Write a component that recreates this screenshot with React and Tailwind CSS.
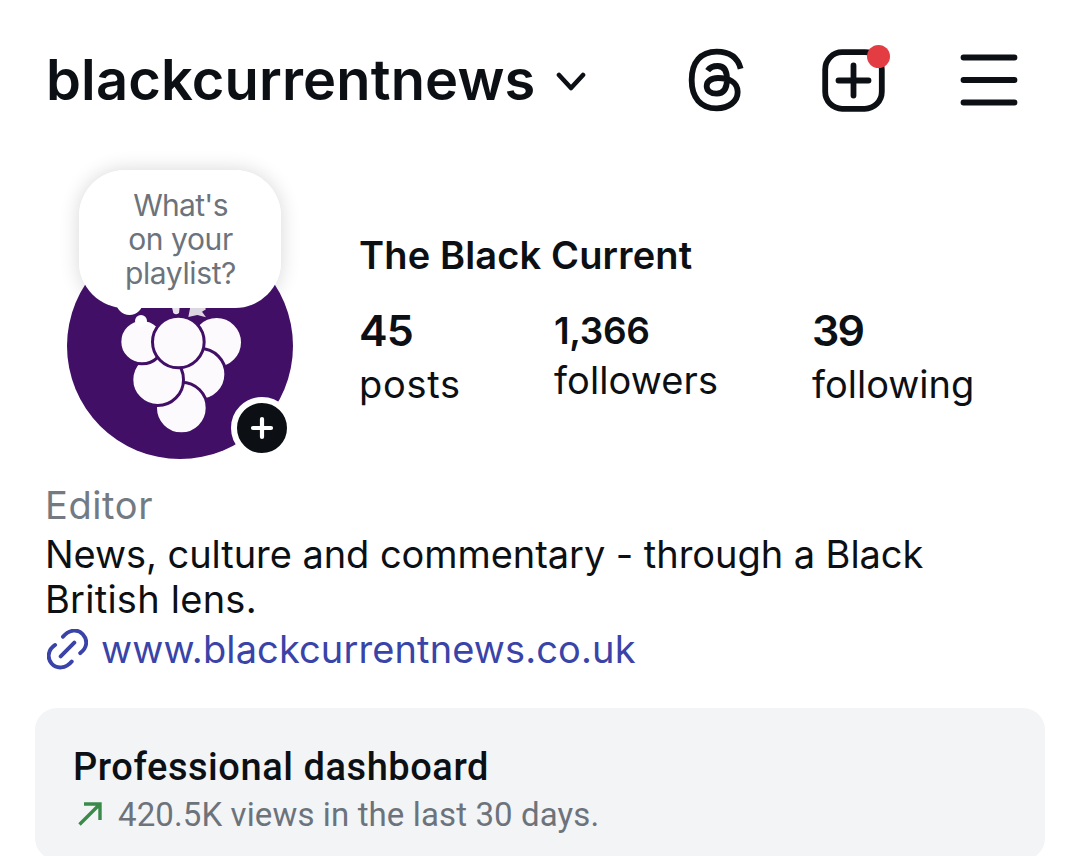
const STATS = [
  {
    value: '45',
    label: 'posts',
    column: 'w-[195px]',
    valueStyle: 'text-[43px] leading-[52px] tracking-[-0.9px]',
    labelStyle: 'mt-[3px] text-[38px] leading-[50px] tracking-[0.7px]',
  },
  {
    value: '1,366',
    label: 'followers',
    column: 'w-[258px]',
    valueStyle: 'text-[37px] leading-[54px] tracking-[-0.4px]',
    labelStyle: 'mt-[-3px] text-[38px] leading-[50px] tracking-[0.1px]',
  },
  {
    value: '39',
    label: 'following',
    column: 'w-[180px]',
    valueStyle: 'text-[43px] leading-[52px] tracking-[-1.8px]',
    labelStyle: 'mt-[3px] text-[38px] leading-[50px] tracking-[0px]',
  },
];

// back to front, each grape is outlined in the background purple
const GRAPES = [
  [500, 562, 73],
  [450, 658, 73],
  [394, 759, 73],
  [323, 674, 73],
  [276, 560, 62],
  [385, 561, 73],
];

function ThreadsIcon() {
  return (
    <svg className="h-16 w-14" viewBox="57 54 168 192" fill="none" stroke="currentColor" strokeWidth="17.5">
      <path d="M215 116C206 82 180 65 143 65C95 65 68 97 68 150C68 203 95 235 143 235C180 235 206 214 206 186C206 155 178 144 147 144C127 144 113 154 113 168C113 183 126 191 143 191C165 191 174 175 174 148C174 120 163 108 146 108C131 108 122 113 116 122" />
    </svg>
  );
}

function Header() {
  return (
    <header className="flex h-40 items-center pl-[46px] pr-[62px]">
      <button className="flex items-center">
        <span className="w-[490px] whitespace-nowrap text-left text-[56px] font-semibold leading-[64px] tracking-[0.15px]">
          blackcurrentnews
        </span>
        <svg className="ml-5 mt-[3px] h-5 w-[30px]" viewBox="0 0 30 20" fill="none" stroke="currentColor" strokeWidth="4.6" strokeLinecap="round" strokeLinejoin="round">
          <path d="M3 3L15 16L27 3" />
        </svg>
      </button>
      <div className="ml-auto flex items-center">
        <ThreadsIcon />
        <button className="relative ml-[78px] mt-px">
          <svg className="h-[63px] w-[63px]" viewBox="0 0 63 63" fill="none" stroke="currentColor" strokeWidth="5.8" strokeLinecap="round">
            <rect x="3.2" y="3.2" width="56.6" height="56.6" rx="17" />
            <path d="M31.5 16.5V46.5M16.5 31.5H46.5" />
          </svg>
          <span className="absolute -right-[5px] -top-[4px] h-[23px] w-[23px] rounded-full bg-[#e33c42]" />
        </button>
        <svg className="ml-[75px] h-[52px] w-[58px]" viewBox="0 0 58 52" stroke="currentColor" strokeWidth="5.8" strokeLinecap="round">
          <path d="M3.5 3.5H54.5M3.5 26H54.5M3.5 48.5H54.5" />
        </svg>
      </div>
    </header>
  );
}

function Avatar() {
  return (
    <div className="relative h-[299px] w-[226px] shrink-0 pt-[73px]">
      <div className="absolute left-3 top-[10px] h-[138px] w-[202px] rounded-[46px] shadow-[0_0_20px_rgba(0,0,0,0.16)]" />
      <svg className="relative h-[226px] w-[226px] rounded-full bg-[#410f66]" viewBox="51 234 678 678">
        <g stroke="#410f66" strokeWidth="9" fill="#fdfafd">
          {GRAPES.map(([cx, cy, r]) => (
            <circle key={`${cx}-${cy}`} cx={cx} cy={cy} r={r + 4.5} />
          ))}
        </g>
        <path d="M362 440L370 474Q378 482 387 474L391 440Z" fill="#e8e0ec" />
        <path d="M424 440L415 486L442 480L468 487L456 470L468 463L455 440Z" fill="#dcd6e0" />
      </svg>
      {/* Note bubble with its two thought dots */}
      <span className="absolute left-[49px] top-[128px] h-[27px] w-[27px] rounded-full bg-white" />
      <span className="absolute left-[68px] top-[155px] h-3 w-3 rounded-full bg-white" />
      <div className="absolute left-3 top-[10px] flex h-[138px] w-[202px] items-center justify-center rounded-[46px] bg-white text-center text-[30px] leading-[34px] tracking-[-0.4px] text-[#6c737b]">
        <p className="pl-px">
          <span className="tracking-[-0.7px]">What's</span>
          <br />
          on your
          <br />
          playlist?
        </p>
      </div>
      <span className="absolute left-[164px] top-[237px] flex h-[62px] w-[62px] items-center justify-center rounded-full border-[6px] border-white bg-[#0c1014]">
        <svg className="h-6 w-6" viewBox="0 0 24 24" stroke="white" strokeWidth="4.2" strokeLinecap="round">
          <path d="M12 3V21M3 12H21" />
        </svg>
      </span>
    </div>
  );
}

function Profile() {
  return (
    <section className="flex pl-[67px]">
      <Avatar />
      <div className="ml-[66px] pt-[70px]">
        <h1 className="whitespace-nowrap text-[38px] font-semibold leading-[50px] tracking-[0.15px]">The Black Current</h1>
        <div className="mt-6 flex">
          {STATS.map((stat) => (
            <div key={stat.label} className={stat.column}>
              <div className={`font-semibold ${stat.valueStyle}`}>{stat.value}</div>
              <div className={stat.labelStyle}>{stat.label}</div>
            </div>
          ))}
        </div>
      </div>
    </section>
  );
}

function Bio() {
  return (
    <section className="pl-[45px] pt-[22px] text-[38px] leading-[45px]">
      <p className="h-[49px] leading-[48px] tracking-[0.6px] text-[#737a82]">Editor</p>
      <p className="whitespace-nowrap pt-[2px]">
        <span className="tracking-[-0.06px]">News, culture and commentary - through a Black</span>
        <br />
        <span className="tracking-[0.25px]">British lens.</span>
      </p>
      <a className="mt-[2px] flex h-[50px] items-center text-[#3a44a8]">
        <svg className="ml-[2px] h-[41px] w-[41px]" viewBox="50 38 126 126" fill="none" stroke="currentColor" strokeWidth="12" strokeLinecap="round">
          <path d="M99 62C119 38 146 38 160 54C176 72 174 96 152 112M75 87C52 102 50 128 64 144C80 162 108 160 126 138M92 122L134 80" />
        </svg>
        <span className="ml-[13px] whitespace-nowrap tracking-[0.12px]">www.blackcurrentnews.co.uk</span>
      </a>
    </section>
  );
}

function Dashboard() {
  return (
    <section className="mx-[35px] mt-[34px] h-[152px] rounded-[22px] bg-[#f3f4f6] pl-[38px] pt-[35px] font-['Roboto',sans-serif]">
      <h2 className="text-[38px] font-medium leading-[48px] tracking-[0.56px]">Professional dashboard</h2>
      <div className="flex h-12 items-center text-[33px] text-[#6c737b]">
        <svg className="-mt-[3px] ml-[5px] h-6 w-6" viewBox="0 0 24 24" fill="none" stroke="#3a8a4a" strokeWidth="3.4">
          <path d="M1.5 22.5L22 2M6 2H22V18" />
        </svg>
        <span className="ml-4 whitespace-nowrap tracking-[0.12px]">420.5K views in the last 30 days.</span>
      </div>
    </section>
  );
}

export default function App() {
  return (
    <main className="h-[856px] w-[1080px] overflow-hidden bg-white font-['Inter',sans-serif] text-[#0c1014]">
      <Header />
      <Profile />
      <Bio />
      <Dashboard />
    </main>
  );
}
